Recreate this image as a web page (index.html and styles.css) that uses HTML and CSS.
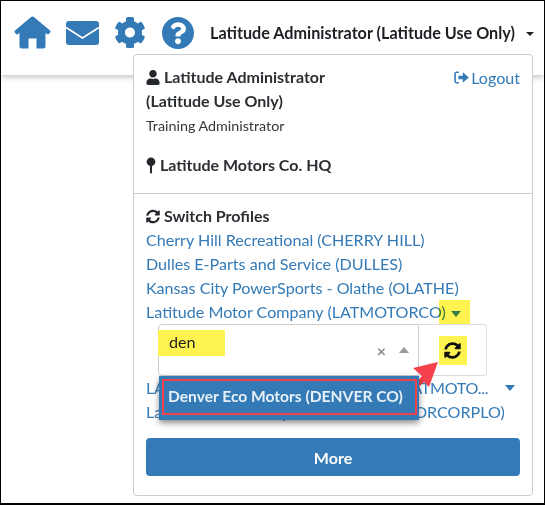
FILE: index.html
```html
<!DOCTYPE html>
<html lang="en">
<head>
  <meta charset="UTF-8">
  <title>Profile Menu</title>
  <link rel="stylesheet" href="styles.css">
</head>
<body>

  <div class="frame">
    <header class="topbar">
      <svg class="nav-icon home" viewBox="0 0 37 33"><path d="M18.500 .5Q17.500 .5 16.500 1.500L1 14.500Q0 15.500 .8 16.500L2.200 18Q3 18.800 4 18L5.500 17V30.500Q5.500 32.500 7.500 32.500H14.500V22.500H22.500V32.500H29.500Q31.500 32.500 31.500 30.500V17L33 18Q34 18.800 34.800 18L36.200 16.500Q37 15.500 36 14.500L20.500 1.500Q19.500 .5 18.500 .5Z"/></svg>
      <svg class="nav-icon mail" viewBox="0 0 33 24"><rect width="33" height="24" rx="3"/><path d="M0 6.500L16.500 17 33 6.500" fill="none" stroke="#fff" stroke-width="1.800"/></svg>
      <svg class="nav-icon cog" viewBox="0 0 512 512"><path d="M487.4 315.7l-42.6-24.6c4.3-23.2 4.3-47 0-70.2l42.6-24.6c4.9-2.8 7.1-8.6 5.5-14-11.1-35.6-30-67.8-54.7-94.6-3.8-4.1-10-5.1-14.8-2.3L380.8 110c-17.9-15.4-38.5-27.3-60.8-35.1V25.8c0-5.6-3.9-10.5-9.4-11.7-36.7-8.2-74.3-7.8-109.2 0-5.5 1.2-9.4 6.1-9.4 11.7V75c-22.2 7.9-42.8 19.8-60.8 35.1L88.7 85.5c-4.9-2.8-11-1.9-14.8 2.3-24.7 26.7-43.6 58.9-54.7 94.6-1.7 5.4.6 11.2 5.5 14L67.3 221c-4.3 23.2-4.3 47 0 70.2l-42.6 24.6c-4.9 2.8-7.1 8.6-5.5 14 11.1 35.6 30 67.8 54.7 94.6 3.8 4.1 10 5.1 14.8 2.3l42.6-24.6c17.9 15.4 38.5 27.3 60.8 35.1v49.2c0 5.6 3.9 10.5 9.4 11.7 36.7 8.2 74.3 7.8 109.2 0 5.5-1.2 9.4-6.1 9.4-11.7v-49.2c22.2-7.9 42.8-19.8 60.8-35.1l42.6 24.6c4.9 2.8 11 1.9 14.8-2.3 24.7-26.7 43.6-58.9 54.7-94.6 1.5-5.5-.7-11.3-5.6-14.1zM256 336c-44.1 0-80-35.9-80-80s35.9-80 80-80 80 35.9 80 80-35.9 80-80 80z"/></svg>
      <svg class="nav-icon help" viewBox="8 8 496 496"><path d="M504 256c0 136.997-111.043 248-248 248S8 392.997 8 256C8 119.083 119.043 8 256 8s248 111.083 248 248zM262.655 90c-54.497 0-89.255 22.957-116.549 63.758-3.536 5.286-2.353 12.415 2.715 16.258l34.699 26.31c5.205 3.947 12.621 3.008 16.665-2.122 17.864-22.658 30.113-35.797 57.303-35.797 20.429 0 45.698 13.148 45.698 32.958 0 14.976-12.363 22.667-32.534 33.976C247.128 238.528 216 254.941 216 296v4c0 6.627 5.373 12 12 12h56c6.627 0 12-5.373 12-12v-1.333c0-28.462 83.186-29.647 83.186-106.667 0-58.002-60.165-102-116.531-102zM256 338c-25.365 0-46 20.635-46 46 0 25.364 20.635 46 46 46s46-20.636 46-46c0-25.365-20.635-46-46-46z"/></svg>
      <div class="user-toggle">Latitude Administrator (Latitude Use Only)<span class="toggle-caret"></span></div>
    </header>

    <!-- Profile dropdown -->
    <div class="profile-menu">
      <div class="menu-top">
        <div class="who">
          <div class="who-row">
            <div class="who-name">
              <svg class="ico" viewBox="0 0 448 512"><path d="M224 256c70.7 0 128-57.3 128-128S294.7 0 224 0 96 57.3 96 128s57.3 128 128 128zm89.6 32h-16.7c-22.2 10.2-46.9 16-72.9 16s-50.6-5.8-72.9-16h-16.7C60.2 288 0 348.2 0 422.4V464c0 26.5 21.5 48 48 48h352c26.5 0 48-21.5 48-48v-41.6c0-74.2-60.2-134.4-134.4-134.4z"/></svg>
              Latitude Administrator<br>(Latitude Use Only)
            </div>
            <a class="logout">
              <svg class="logout-ico" viewBox="0 0 20 16"><path d="M6 1.500H3A1.700 1.700 0 0 0 1.300 3.200v9.600A1.700 1.700 0 0 0 3 14.500H6" fill="none" stroke="#337ab7" stroke-width="2"/><path d="M5.500 5.700H11V1.500L18.500 8 11 14.500V10.300H5.500Z" fill="#337ab7"/></svg>Logout
            </a>
          </div>
          <div class="role">Training Administrator</div>
          <div class="location">
            <svg class="ico pin" viewBox="0 0 10 18"><circle cx="5" cy="5" r="4.600"/><rect x="3.900" y="9" width="2.200" height="8.500" rx="1"/></svg>
            Latitude Motors Co. HQ
          </div>
        </div>
      </div>

      <div class="switch">
        <div class="switch-title">
          <svg class="ico" viewBox="0 0 512 512"><path d="M370.72 133.28C339.458 104.008 298.888 87.962 255.848 88c-77.458.068-144.328 53.178-162.791 126.85-1.344 5.363-6.122 9.15-11.651 9.15H24.103c-7.498 0-13.194-6.807-11.807-14.176C33.933 94.924 134.813 8 256 8c66.448 0 126.791 26.136 171.315 68.685L463.03 40.97C478.149 25.851 504 36.559 504 57.941V192c0 13.255-10.745 24-24 24H345.941c-21.382 0-32.09-25.851-16.971-40.971l41.75-41.749zM32 296h134.059c21.382 0 32.09 25.851 16.971 40.971l-41.75 41.75c31.262 29.273 71.835 45.319 114.876 45.28 77.418-.07 144.315-53.144 162.787-126.849 1.344-5.363 6.122-9.15 11.651-9.15h57.304c7.498 0 13.194 6.807 11.807 14.176C478.067 417.076 377.187 504 256 504c-66.448 0-126.791-26.136-171.315-68.685L48.97 471.03C33.851 486.149 8 475.441 8 454.059V320c0-13.255 10.745-24 24-24z"/></svg>
          Switch Profiles
        </div>
        <a class="profile">Cherry Hill Recreational (CHERRY HILL)</a>
        <a class="profile">Dulles E-Parts and Service (DULLES)</a>
        <a class="profile">Kansas City PowerSports - Olathe (OLATHE)</a>
        <a class="profile">Latitude Motor Company (LATMOTORCO)<span class="mark"><span class="caret green"></span></span></a>

        <div class="picker">
          <div class="picker-input">
            <span class="search-mark">den</span>
            <span class="clear">×</span>
            <span class="caret-up"></span>
          </div>
          <div class="picker-go">
            <span class="go-mark">
              <svg class="go-ico" viewBox="0 0 512 512"><path d="M370.72 133.28C339.458 104.008 298.888 87.962 255.848 88c-77.458.068-144.328 53.178-162.791 126.85-1.344 5.363-6.122 9.15-11.651 9.15H24.103c-7.498 0-13.194-6.807-11.807-14.176C33.933 94.924 134.813 8 256 8c66.448 0 126.791 26.136 171.315 68.685L463.03 40.97C478.149 25.851 504 36.559 504 57.941V192c0 13.255-10.745 24-24 24H345.941c-21.382 0-32.09-25.851-16.971-40.971l41.75-41.749zM32 296h134.059c21.382 0 32.09 25.851 16.971 40.971l-41.75 41.75c31.262 29.273 71.835 45.319 114.876 45.28 77.418-.07 144.315-53.144 162.787-126.849 1.344-5.363 6.122-9.15 11.651-9.15h57.304c7.498 0 13.194 6.807 11.807 14.176C478.067 417.076 377.187 504 256 504c-66.448 0-126.791-26.136-171.315-68.685L48.97 471.03C33.851 486.149 8 475.441 8 454.059V320c0-13.255 10.745-24 24-24z"/></svg>
            </span>
          </div>
          <!-- callout arrow, then the open results list on top of it -->
          <svg class="callout" viewBox="0 0 50 40"><path d="M0 40L17 21 8 13 33 7 24 32 19 27 5 40Z" fill="#f4414b"/></svg>
          <div class="results"><div class="result">Denver Eco Motors (DENVER CO)</div></div>
        </div>

        <a class="profile split"><span class="split-name">LATITUDE MOTOR CORPORATION (LATMOTO...</span><span class="caret"></span></a>
        <a class="profile">Latitude Motor Corporation (LATMOTORCORPLO)</a>
        <button class="more-btn">More</button>
      </div>
    </div>
  </div>

</body>
</html>
```

FILE: styles.css
```css
* {
  box-sizing: border-box;
}

body {
  margin: 0;
  font-family: 'Lato', sans-serif;
  background-color: #fff;
}

.frame {
  position: relative;
  width: 545px;
  height: 505px;
  border: 1px solid #000;
  border-bottom-width: 2px;
  overflow: hidden;
}

.topbar {
  display: flex;
  align-items: center;
  height: 74px;
  padding: 0 0 11px 13px;
  background-color: #fff;
  box-shadow: 0 2px 6px rgba(0,0,0,0.25);
}

.nav-icon {
  fill: #337ab7;
  flex: none;
}

.home {
  width: 37px;
  height: 33px;
}

.mail {
  width: 33px;
  height: 24px;
  margin-left: 15px;
}

.cog {
  width: 32px;
  height: 33px;
  margin-left: 15px;
}

.help {
  width: 32px;
  height: 32px;
  margin-left: 16px;
}

.user-toggle {
  margin-left: 16px;
  font-size: 16.200px;
  font-weight: 700;
  color: #1c2024;
  white-space: nowrap;
}

.toggle-caret {
  display: inline-block;
  margin-left: 11px;
  vertical-align: 3px;
  border-top: 4px solid #222;
  border-left: 4px solid transparent;
  border-right: 4px solid transparent;
}

.profile-menu {
  position: absolute;
  top: 53px;
  left: 132px;
  width: 400px;
  height: 442px;
  background-color: #fff;
  border: 1px solid #ccc;
  border-radius: 4px;
}

.menu-top {
  height: 139px;
  padding: 10px 12px 0;
  border-bottom: 1px solid #ccc;
}

.who-row {
  display: flex;
  justify-content: space-between;
}

.who-name {
  font-size: 16px;
  font-weight: 700;
  line-height: 24px;
  color: #2b2f33;
}

.ico {
  width: 14px;
  height: 15px;
  fill: #24282c;
  vertical-align: -2px;
}

.pin {
  width: 10px;
  height: 17px;
  vertical-align: -3px;
}

.logout {
  display: flex;
  align-items: center;
  height: 24px;
  font-size: 16.100px;
  color: #337ab7;
}

.logout-ico {
  width: 16px;
  height: 13px;
  margin-right: 1px;
}

.role {
  margin-top: 3px;
  font-size: 14.300px;
  line-height: 20px;
  color: #33383c;
}

.location {
  margin-top: 17px;
  font-size: 16px;
  font-weight: 700;
  line-height: 24px;
  color: #2b2f33;
}

.switch {
  padding: 10px 12px 0;
}

.switch-title {
  font-size: 16px;
  font-weight: 700;
  line-height: 24px;
  color: #2b2f33;
}

.profile {
  display: block;
  font-size: 16.100px;
  line-height: 24px;
  color: #337ab7;
  white-space: nowrap;
}

.split {
  display: flex;
  justify-content: space-between;
  align-items: center;
  padding-right: 5px;
}

.split-name {
  letter-spacing: -0.3px;
}

.caret {
  display: inline-block;
  border-top: 6px solid #337ab7;
  border-left: 5.500px solid transparent;
  border-right: 5.500px solid transparent;
}

.caret.green {
  border-top-color: #2e7d46;
  vertical-align: 1px;
}

.mark {
  display: inline-block;
  margin-left: -7px;
  padding: 0 9px 0 12px;
  background-color: #fff44f;
  mix-blend-mode: multiply;
}

.picker {
  position: relative;
  display: flex;
  width: 329px;
  height: 52px;
  margin: 0 0 0 12px;
}

.picker-input {
  position: relative;
  display: flex;
  align-items: center;
  width: 261px;
  padding: 0 9px 0 0;
  border: 1px solid #ccc;
  border-radius: 4px 0 0 4px;
}

.search-mark {
  width: 67px;
  height: 26px;
  margin: -15px 0 0 -1px;
  padding-left: 11px;
  font-size: 16.200px;
  line-height: 24px;
  color: #222;
  background-color: #fff44f;
}

.clear {
  margin-left: auto;
  font-size: 16px;
  font-weight: 700;
  color: #888;
}

.caret-up {
  margin-left: 13px;
  border-bottom: 6px solid #999;
  border-left: 5px solid transparent;
  border-right: 5px solid transparent;
}

.picker-go {
  display: flex;
  align-items: center;
  justify-content: center;
  width: 68px;
  border: 1px solid #ddd;
  border-left: none;
  border-radius: 0 4px 4px 0;
}

.go-mark {
  display: flex;
  align-items: center;
  justify-content: center;
  width: 28px;
  height: 29px;
  background-color: #fff44f;
}

.go-ico {
  width: 17px;
  height: 17px;
  fill: #111;
}

.callout {
  position: absolute;
  top: 31px;
  left: 247px;
  width: 50px;
  height: 40px;
}

.results {
  position: absolute;
  top: 52px;
  left: 1px;
  width: 260px;
  height: 44px;
  padding: 3px 2px 3px 3px;
  background-color: #337ab7;
  box-shadow: 0 3px 6px rgba(0,0,0,0.45);
}

.result {
  height: 36px;
  padding-left: 4px;
  font-size: 15.600px;
  font-weight: 700;
  line-height: 31px;
  color: #e8f0f7;
  white-space: nowrap;
  border: 2px solid #f4414b;
}

.more-btn {
  display: block;
  width: 374px;
  height: 38px;
  margin-top: 14px;
  font-family: inherit;
  font-size: 16px;
  font-weight: 700;
  color: #fff;
  background-color: #337ab7;
  border: none;
  border-radius: 4px;
}
```
